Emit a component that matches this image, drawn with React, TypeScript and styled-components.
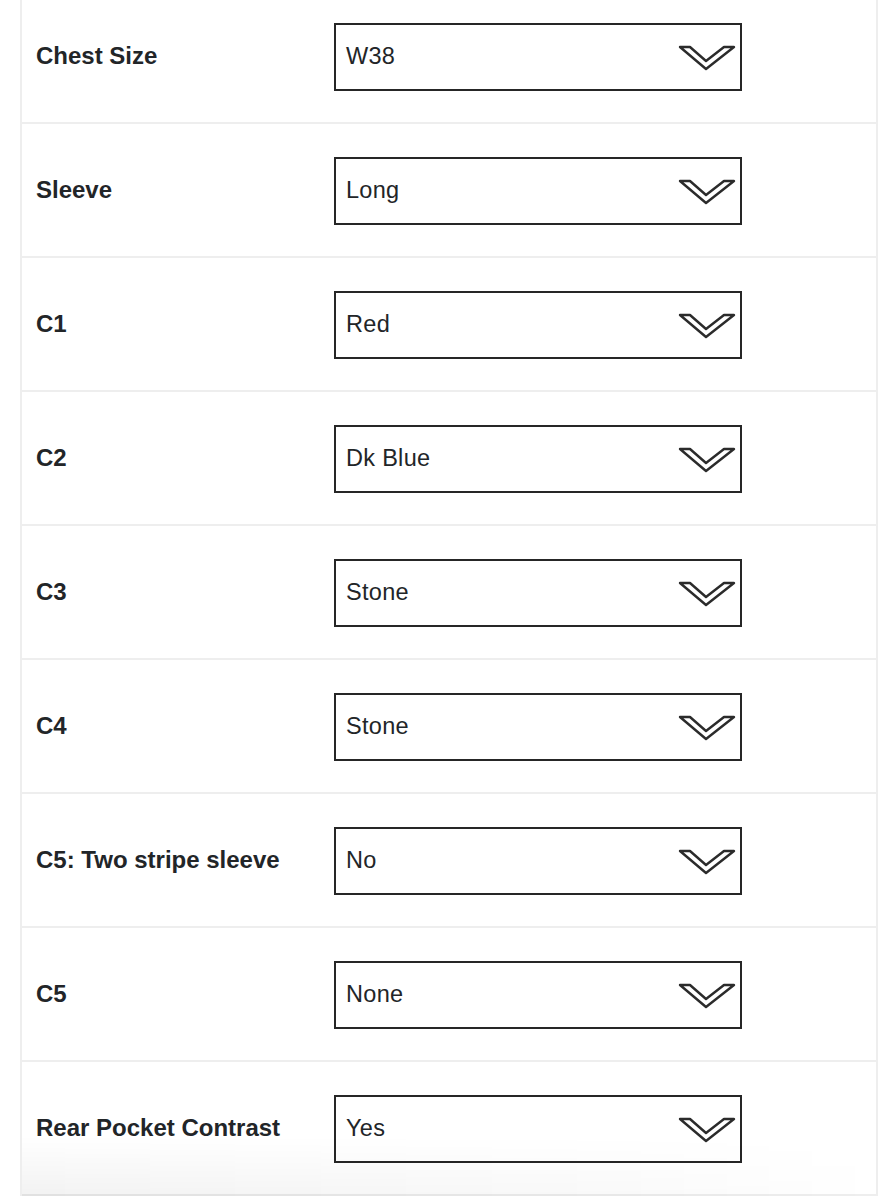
import React from 'react';
import styled, { createGlobalStyle } from 'styled-components';

const GlobalStyle = createGlobalStyle`
  html, body {
    margin: 0;
    padding: 0;
    background: #ffffff;
  }
  body {
    font-family: "Liberation Sans", Arial, sans-serif;
    color: #222528;
    overflow: hidden;
  }
`;

type Option = { label: string; value: string };

const options: Option[] = [
  { label: 'Chest Size', value: 'W38' },
  { label: 'Sleeve', value: 'Long' },
  { label: 'C1', value: 'Red' },
  { label: 'C2', value: 'Dk Blue' },
  { label: 'C3', value: 'Stone' },
  { label: 'C4', value: 'Stone' },
  { label: 'C5: Two stripe sleeve', value: 'No' },
  { label: 'C5', value: 'None' },
  { label: 'Rear Pocket Contrast', value: 'Yes' },
];

function Chevron() {
  return (
    <ChevronSvg width="58" height="28" viewBox="0 0 58 28">
      <polygon
        points="2,3 28,25 56,3 46,3 28,17 12,3"
        fill="#fff"
        stroke="#2b2b2b"
        strokeWidth="2.4"
        strokeLinejoin="round"
      />
    </ChevronSvg>
  );
}

export default function App() {
  return (
    <>
      <GlobalStyle />
      <Page>
        <OptionList>
          {options.map((o, i) => (
            <OptionRow key={i}>
              <Label>{o.label}</Label>
              <SelectBox>
                <Value>{o.value}</Value>
                <Chevron />
              </SelectBox>
            </OptionRow>
          ))}
          <FooterFade />
        </OptionList>
      </Page>
    </>
  );
}

const Page = styled.div`
  width: 896px;
  height: 1200px;
  overflow: hidden;
  padding: 0 18px 0 20px;
  box-sizing: border-box;
`;

const OptionList = styled.div`
  position: relative;
  margin-top: -10px;
  border-left: 2px solid #eeeeee;
  border-right: 2px solid #eeeeee;
  background: #fff;
`;

const OptionRow = styled.div`
  display: flex;
  align-items: center;
  height: 132px;
  border-bottom: 2px solid #eeeeee;
  padding-left: 14px;
`;

const Label = styled.div`
  width: 298px;
  font-size: 24px;
  font-weight: 700;
  color: #222528;
`;

const SelectBox = styled.div`
  display: flex;
  align-items: center;
  justify-content: space-between;
  width: 408px;
  height: 68px;
  box-sizing: border-box;
  border: 2px solid #262626;
  padding: 0 4px 0 10px;
  margin-top: 2px;
`;

const Value = styled.span`
  font-size: 23.5px;
  font-weight: 400;
  letter-spacing: 0.3px;
  color: #222528;
  margin-top: -1px;
`;

const ChevronSvg = styled.svg`
  display: block;
  margin-top: 1px;
`;

const FooterFade = styled.div`
  position: absolute;
  left: 0;
  right: 0;
  bottom: 0;
  height: 60px;
  pointer-events: none;
  background: linear-gradient(to right, rgba(0, 0, 0, 0.05), rgba(0, 0, 0, 0.025) 70%, rgba(0, 0, 0, 0));
  -webkit-mask-image: linear-gradient(to bottom, transparent, #000);
  mask-image: linear-gradient(to bottom, transparent, #000);
`;
